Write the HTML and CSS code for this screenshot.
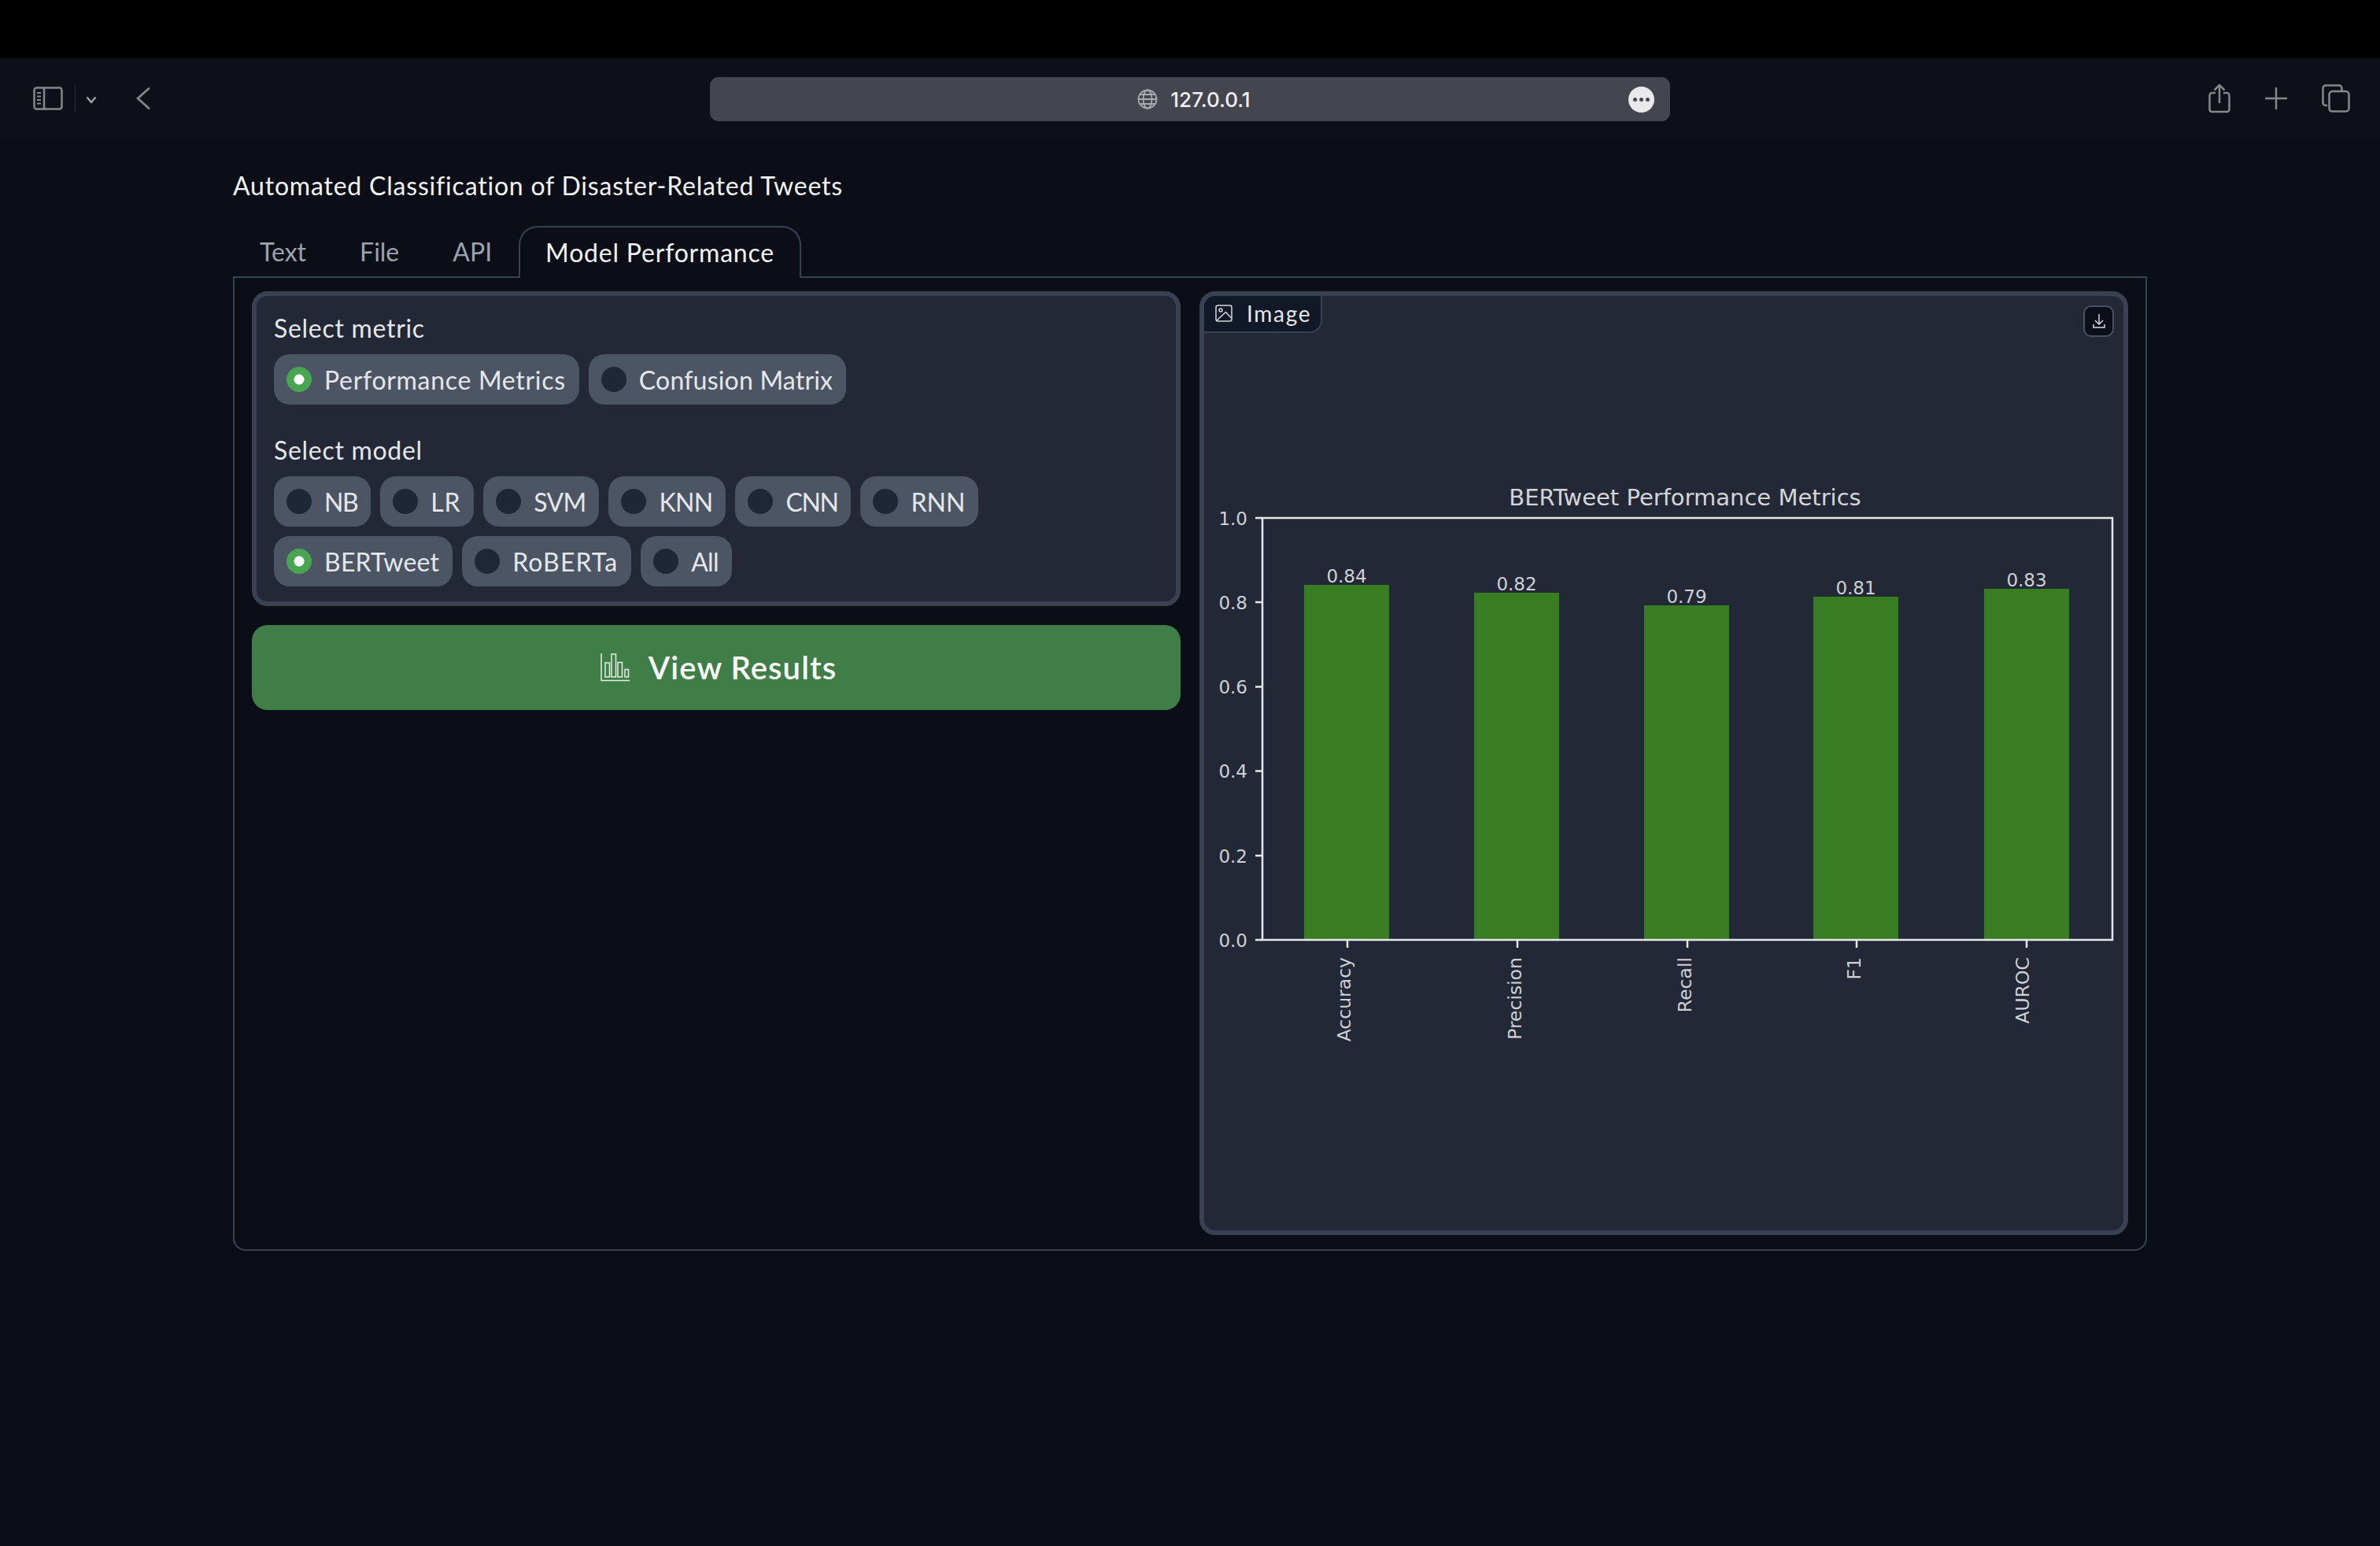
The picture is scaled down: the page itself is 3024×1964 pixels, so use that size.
FILE: index.html
```html
<!DOCTYPE html>
<html lang="en">
<head>
    <meta charset="UTF-8">
    <title>Automated Classification of Disaster-Related Tweets</title>
    <link rel="stylesheet" href="styles.css">
</head>
<body>
    <div class="top-strip"></div>

    <!-- Barra del navegador -->
    <header class="toolbar">
        <div class="toolbar-left">
            <svg class="icon-sidebar" width="38" height="30" viewBox="0 0 38 30" fill="none" stroke="#85878c" stroke-width="2.5">
                <rect x="1.5" y="1.5" width="35" height="27" rx="3"/>
                <path d="M14 1.5v27"/>
                <path d="M5 8h5M5 12.5h5M5 17h5M5 21.5h5" stroke-width="2"/>
            </svg>
            <span class="toolbar-divider"></span>
            <svg class="icon-down" width="14" height="10" viewBox="0 0 14 10" fill="none" stroke="#a0a2a6" stroke-width="2.4">
                <path d="M1.5 1.500L7 8l5.500-6.500"/>
            </svg>
            <svg class="icon-back" width="18" height="28" viewBox="0 0 18 28" fill="none" stroke="#85878c" stroke-width="2.800" stroke-linecap="round">
                <path d="M16 1.500L2 14l14 12.500"/>
            </svg>
        </div>
        <div class="address-bar">
            <svg class="icon-globe" width="26" height="26" viewBox="0 0 26 26" fill="none" stroke="#a9abb0" stroke-width="1.800">
                <circle cx="13" cy="13" r="11.500"/>
                <ellipse cx="13" cy="13" rx="5.500" ry="11.500"/>
                <path d="M1.500 13h23M3.500 7h19M3.500 19h19"/>
            </svg>
            <span class="address-text">127.0.0.1</span>
            <span class="address-more"><i></i><i></i><i></i></span>
        </div>
        <div class="toolbar-right">
            <svg width="28" height="38" viewBox="0 0 28 38" fill="none" stroke="#85878c" stroke-width="2.500">
                <path d="M9 12H4.500a3 3 0 0 0-3 3v18a3 3 0 0 0 3 3h19a3 3 0 0 0 3-3V15a3 3 0 0 0-3-3H19"/>
                <path d="M14 25V2M7.500 8.500L14 2l6.500 6.500"/>
            </svg>
            <svg width="28" height="28" viewBox="0 0 28 28" fill="none" stroke="#85878c" stroke-width="2.500">
                <path d="M14 0v28M0 14h28"/>
            </svg>
            <svg width="36" height="36" viewBox="0 0 36 36" fill="none" stroke="#85878c" stroke-width="2.500">
                <path d="M7 27H5a3.500 3.500 0 0 1-3.500-3.500V5A3.500 3.500 0 0 1 5 1.500h17A3.500 3.500 0 0 1 25.500 5v3"/>
                <rect x="9.500" y="9" width="25" height="25.500" rx="4"/>
            </svg>
        </div>
    </header>

    <main class="app">
        <p class="app-title">Automated Classification of Disaster-Related Tweets</p>

        <nav class="tabs">
            <button class="tab">Text</button>
            <button class="tab">File</button>
            <button class="tab">API</button>
            <button class="tab tab-active">Model Performance</button>
        </nav>

        <section class="tab-panel">
            <div class="controls">
                <div class="block">
                    <div class="field">
                        <span class="field-label">Select metric</span>
                        <div class="radio-group">
                            <label class="pill sp-wide"><span class="radio checked"></span>Performance Metrics</label>
                            <label class="pill sp-open"><span class="radio"></span>Confusion Matrix</label>
                        </div>
                    </div>
                    <div class="field">
                        <span class="field-label">Select model</span>
                        <div class="radio-group">
                            <label class="pill sp-tight"><span class="radio"></span>NB</label>
                            <label class="pill sp-wide"><span class="radio"></span>LR</label>
                            <label class="pill sp-close"><span class="radio"></span>SVM</label>
                            <label class="pill sp-close"><span class="radio"></span>KNN</label>
                            <label class="pill sp-tight"><span class="radio"></span>CNN</label>
                            <label class="pill"><span class="radio"></span>RNN</label>
                            <label class="pill sp-open"><span class="radio checked"></span>BERTweet</label>
                            <label class="pill sp-widest"><span class="radio"></span>RoBERTa</label>
                            <label class="pill sp-close"><span class="radio"></span>All</label>
                        </div>
                    </div>
                </div>
                <button class="view-btn">
                    <svg width="37" height="36" viewBox="0 0 37 36" fill="none" stroke="#e4ede5" stroke-width="1.500">
                        <path d="M1 0v34.500h36"/>
                        <rect x="6" y="12" width="5.500" height="18"/>
                        <rect x="14" y="1" width="5.500" height="29"/>
                        <rect x="22" y="11.500" width="5.500" height="18.500"/>
                        <rect x="31" y="20.500" width="4.500" height="9.500"/>
                    </svg>
                    View Results
                </button>
            </div>

            <div class="image-block">
                <div class="image-label">
                    <svg width="22" height="22" viewBox="0 0 22 22" fill="none" stroke="#d5d8dd" stroke-width="1.500">
                        <rect x="1" y="1" width="20" height="20" rx="2.500"/>
                        <circle cx="7" cy="7" r="2"/>
                        <path d="M1.500 20.500L13.500 9.500l7 7.500"/>
                    </svg>
                    Image
                </div>
                <button class="download-btn">
                    <svg width="18" height="20" viewBox="0 0 18 20" fill="none" stroke="#d5d8dd" stroke-width="1.500">
                        <path d="M9 1v12.500M4 9l5 5 5-5M2 14v4h14v-4"/>
                    </svg>
                </button>
                <svg class="chart" width="1168" height="1187" viewBox="0 0 1168 1187">
                    <text class="chart-title" x="611" y="266" text-anchor="middle">BERTweet Performance Metrics</text>

                    <rect class="bar" x="127" y="367" width="108" height="451"/>
                    <rect class="bar" x="343" y="377" width="108" height="441"/>
                    <rect class="bar" x="559" y="393" width="108" height="425"/>
                    <rect class="bar" x="774" y="382" width="108" height="436"/>
                    <rect class="bar" x="991" y="372" width="108" height="446"/>

                    <rect class="frame" x="74" y="282" width="1080" height="536"/>
                    <path class="frame" d="M65 282h9M65 389h9M65 496.500h9M65 603.500h9M65 711h9M65 818h9M182 818v10M398 818v10M614 818v10M829 818v10M1045 818v10"/>

                    <g class="tick" text-anchor="end">
                        <text x="55" y="291">1.0</text>
                        <text x="55" y="398">0.8</text>
                        <text x="55" y="505">0.6</text>
                        <text x="55" y="612">0.4</text>
                        <text x="55" y="720">0.2</text>
                        <text x="55" y="827">0.0</text>
                    </g>

                    <g class="tick" text-anchor="middle">
                        <text x="181" y="364">0.84</text>
                        <text x="397" y="374">0.82</text>
                        <text x="613" y="390">0.79</text>
                        <text x="828" y="379">0.81</text>
                        <text x="1045" y="369">0.83</text>
                    </g>

                    <g class="tick-long" text-anchor="end">
                        <text transform="translate(186 840) rotate(-90)">Accuracy</text>
                        <text transform="translate(403 840) rotate(-90)">Precision</text>
                        <text transform="translate(619 840) rotate(-90)">Recall</text>
                        <text transform="translate(834 840) rotate(-90)">F1</text>
                        <text transform="translate(1048 840) rotate(-90)">AUROC</text>
                    </g>
                </svg>
            </div>
        </section>
    </main>
</body>
</html>
```

FILE: styles.css
```css
* {
    box-sizing: border-box;
}

body {
    margin: 0;
    width: 3024px;
    height: 1964px;
    overflow: hidden;
    background-color: #0b0e17;
    color: #f3f4f6;
    font-family: "Lato", "Open Sans", sans-serif;
}

.top-strip {
    height: 74px;
    background-color: #000;
}

/* Barra del navegador */
.toolbar {
    height: 102px;
    display: grid;
    grid-template-columns: 1fr 1220px 1fr;
    align-items: center;
    background-color: #0d1018;
}

.toolbar-left {
    display: flex;
    align-items: center;
    padding-left: 42px;
}

.toolbar-divider {
    width: 1px;
    height: 35px;
    margin-left: 15px;
    background-color: #2a2c33;
}

.icon-down {
    margin-left: 13px;
    margin-top: 3px;
}

.icon-back {
    margin-left: 50px;
}

.address-bar {
    position: relative;
    height: 56px;
    margin-top: 2px;
    display: flex;
    align-items: center;
    justify-content: center;
    gap: 16px;
    padding-left: 10px;
    background-color: #43464e;
    border-radius: 11px;
}

.address-text {
    font-family: "Inter", sans-serif;
    font-size: 26px;
    font-weight: 500;
    color: #f0f0f2;
}

.address-more {
    position: absolute;
    top: 12px;
    right: 20px;
    width: 33px;
    height: 33px;
    display: flex;
    align-items: center;
    justify-content: center;
    gap: 3px;
    border-radius: 50%;
    background-color: #e9e9eb;
}

.address-more i {
    width: 5px;
    height: 5px;
    border-radius: 50%;
    background-color: #43464e;
}

.toolbar-right {
    display: flex;
    align-items: center;
    justify-content: flex-end;
    gap: 44px;
    padding-right: 38px;
}

/* Contenido */
.app {
    padding: 40px 296px 0;
}

.app-title {
    margin: 0;
    height: 40px;
    font-size: 32px;
    line-height: 40px;
    letter-spacing: 0.8px;
    color: #f3f4f6;
}

.tabs {
    display: flex;
    margin-top: 31px;
    height: 66px;
}

.tab {
    height: 64px;
    padding: 0 32px;
    background: transparent;
    border: 2px solid transparent;
    border-bottom: none;
    border-radius: 24px 24px 0 0;
    font-family: inherit;
    font-size: 32px;
    line-height: 60px;
    color: #9ca3af;
}

.tab-active {
    height: 66px;
    position: relative;
    z-index: 1;
    border-color: #3a4152;
    background-color: #0b0e17;
    letter-spacing: 0.8px;
    color: #f3f4f6;
}

.tab-panel {
    height: 1238px;
    margin-top: -2px;
    padding: 17px 22px 18px;
    display: grid;
    grid-template-columns: 1fr 1fr;
    gap: 24px;
    border: 2px solid #3a4152;
    border-radius: 0 0 16px 16px;
}

.controls {
    display: flex;
    flex-direction: column;
    gap: 24px;
}

.block {
    height: 400px;
    padding: 21px 22px 18px;
    display: flex;
    flex-direction: column;
    gap: 38px;
    background-color: #222835;
    border: 6px solid #3a4152;
    border-radius: 20px;
}

.field-label {
    display: block;
    height: 40px;
    margin-bottom: 13px;
    font-size: 32px;
    line-height: 40px;
    letter-spacing: 0.7px;
    color: #e5e7eb;
}

.radio-group {
    display: flex;
    flex-wrap: wrap;
    gap: 12px;
}

.pill {
    height: 64px;
    padding: 0 17px 0 16px;
    display: flex;
    align-items: center;
    gap: 16px;
    background-color: #4b5563;
    border-radius: 20px;
    font-size: 32px;
    color: #e5e7eb;
}

/* Ajuste del ancho de cada etiqueta */
.sp-tight {
    letter-spacing: -1.4px;
}

.sp-close {
    letter-spacing: -0.7px;
}

.sp-open {
    letter-spacing: 0.2px;
}

.sp-wide {
    letter-spacing: 0.7px;
}

.sp-widest {
    letter-spacing: 1.1px;
}

.radio {
    width: 32px;
    height: 32px;
    border-radius: 50%;
    background-color: #1f2737;
}

.radio.checked {
    background-color: #4aa552;
    background-image: radial-gradient(circle, #fff 0, #fff 6px, transparent 7px);
}

.view-btn {
    height: 108px;
    padding-left: 12px;
    display: flex;
    align-items: center;
    justify-content: center;
    gap: 24px;
    background-color: #3f7f47;
    border: none;
    border-radius: 20px;
    font-family: inherit;
    font-size: 40px;
    font-weight: 600;
    letter-spacing: 1.1px;
    color: #fff;
}

.image-block {
    position: relative;
    overflow: hidden;
    background-color: #222835;
    border: 6px solid #3a4152;
    border-radius: 20px;
}

.image-label {
    position: absolute;
    top: 0;
    left: 0;
    width: 150px;
    height: 47px;
    padding-left: 14px;
    padding-bottom: 2px;
    display: flex;
    align-items: center;
    gap: 18px;
    background-color: #111827;
    border-right: 2px solid #3a4152;
    border-bottom: 2px solid #3a4152;
    border-radius: 0 0 16px 0;
    font-size: 28px;
    letter-spacing: 1.7px;
    color: #e5e7eb;
}

.download-btn {
    position: absolute;
    top: 12px;
    right: 12px;
    width: 39px;
    height: 40px;
    padding: 0;
    display: flex;
    align-items: center;
    justify-content: center;
    background-color: #0b0f19;
    border: 2px solid #4b5261;
    border-radius: 10px;
}

/* Grafica */
.chart {
    display: block;
    font-family: "DejaVu Sans", sans-serif;
}

.chart-title {
    font-size: 29px;
    fill: #d3d5d9;
}

.tick {
    font-size: 23px;
    fill: #cfd1d5;
}

.tick-long {
    font-size: 23.500px;
    fill: #cfd1d5;
}

.bar {
    fill: #387d21;
}

.frame {
    fill: none;
    stroke: #e6e7ea;
    stroke-width: 2.500;
}
```
